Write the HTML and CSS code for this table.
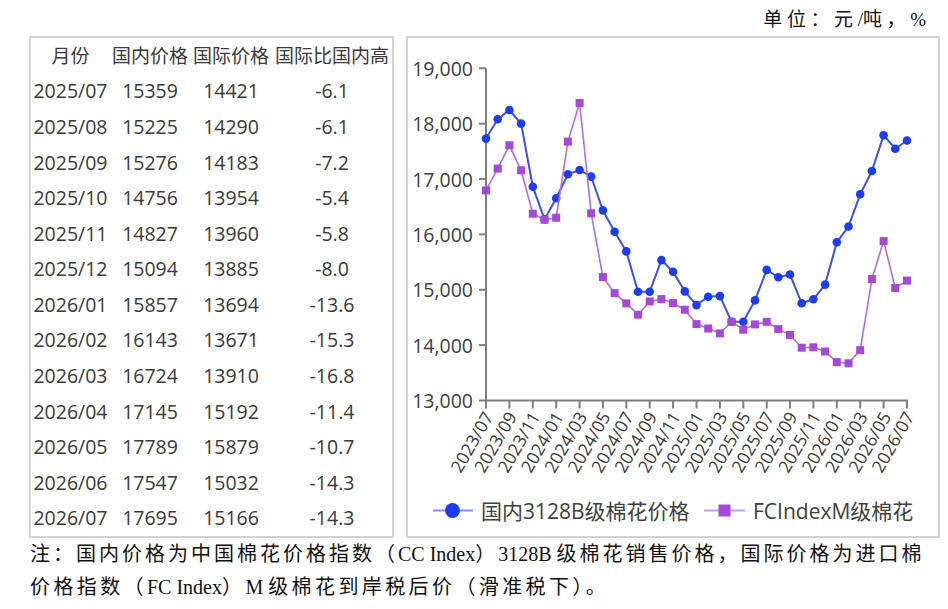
FILE: index.html
```html
<!DOCTYPE html>
<html lang="zh">
<head>
<meta charset="utf-8">
<title>棉花价格</title>
<link rel="stylesheet" href="styles.css">
</head>
<body>
<div class="unit">单位：元<span class="lat">/</span>吨，<span class="lat">%</span></div>
<div class="main">
  <div class="tbl">
    <div class="row head"><span>月份</span><span>国内价格</span><span>国际价格</span><span>国际比国内高</span></div>
    <div class="row"><span>2025/07</span><span>15359</span><span>14421</span><span>-6.1</span></div>
    <div class="row"><span>2025/08</span><span>15225</span><span>14290</span><span>-6.1</span></div>
    <div class="row"><span>2025/09</span><span>15276</span><span>14183</span><span>-7.2</span></div>
    <div class="row"><span>2025/10</span><span>14756</span><span>13954</span><span>-5.4</span></div>
    <div class="row"><span>2025/11</span><span>14827</span><span>13960</span><span>-5.8</span></div>
    <div class="row"><span>2025/12</span><span>15094</span><span>13885</span><span>-8.0</span></div>
    <div class="row"><span>2026/01</span><span>15857</span><span>13694</span><span>-13.6</span></div>
    <div class="row"><span>2026/02</span><span>16143</span><span>13671</span><span>-15.3</span></div>
    <div class="row"><span>2026/03</span><span>16724</span><span>13910</span><span>-16.8</span></div>
    <div class="row"><span>2026/04</span><span>17145</span><span>15192</span><span>-11.4</span></div>
    <div class="row"><span>2026/05</span><span>17789</span><span>15879</span><span>-10.7</span></div>
    <div class="row"><span>2026/06</span><span>17547</span><span>15032</span><span>-14.3</span></div>
    <div class="row"><span>2026/07</span><span>17695</span><span>15166</span><span>-14.3</span></div>
  </div>
  <div class="chart">
    <svg class="chart-svg" width="530" height="498" viewBox="0 0 530 498">
      <defs>
        <marker id="mb" markerUnits="userSpaceOnUse" markerWidth="10" markerHeight="10" refX="5" refY="5">
          <circle cx="5" cy="5" r="4.3" class="dot-blue"/>
        </marker>
        <marker id="mp" markerUnits="userSpaceOnUse" markerWidth="10" markerHeight="10" refX="5" refY="5">
          <rect x="1" y="1" width="8" height="8" class="dot-purple"/>
        </marker>
      </defs>
      <g transform="translate(-408 -38)">
        <g class="axis">
          <line x1="486" y1="68.3" x2="486" y2="401.5"/>
          <line x1="485" y1="400.5" x2="908" y2="400.5"/>
          <line x1="479" y1="68.3" x2="486" y2="68.3"/>
          <line x1="479" y1="123.7" x2="486" y2="123.7"/>
          <line x1="479" y1="179" x2="486" y2="179"/>
          <line x1="479" y1="234.4" x2="486" y2="234.4"/>
          <line x1="479" y1="289.8" x2="486" y2="289.8"/>
          <line x1="479" y1="345.1" x2="486" y2="345.1"/>
          <line x1="479" y1="400.5" x2="486" y2="400.5"/>
          <line x1="486" y1="400.5" x2="486" y2="408.5"/>
          <line x1="509.4" y1="400.5" x2="509.4" y2="408.5"/>
          <line x1="532.8" y1="400.5" x2="532.8" y2="408.5"/>
          <line x1="556.2" y1="400.5" x2="556.2" y2="408.5"/>
          <line x1="579.6" y1="400.5" x2="579.6" y2="408.5"/>
          <line x1="602.9" y1="400.5" x2="602.9" y2="408.5"/>
          <line x1="626.3" y1="400.5" x2="626.3" y2="408.5"/>
          <line x1="649.7" y1="400.5" x2="649.7" y2="408.5"/>
          <line x1="673.1" y1="400.5" x2="673.1" y2="408.5"/>
          <line x1="696.5" y1="400.5" x2="696.5" y2="408.5"/>
          <line x1="719.9" y1="400.5" x2="719.9" y2="408.5"/>
          <line x1="743.3" y1="400.5" x2="743.3" y2="408.5"/>
          <line x1="766.7" y1="400.5" x2="766.7" y2="408.5"/>
          <line x1="790" y1="400.5" x2="790" y2="408.5"/>
          <line x1="813.4" y1="400.5" x2="813.4" y2="408.5"/>
          <line x1="836.8" y1="400.5" x2="836.8" y2="408.5"/>
          <line x1="860.2" y1="400.5" x2="860.2" y2="408.5"/>
          <line x1="883.6" y1="400.5" x2="883.6" y2="408.5"/>
          <line x1="907" y1="400.5" x2="907" y2="408.5"/>
        </g>
        <g class="ylab">
          <text x="473" y="68.3">19,000</text>
          <text x="473" y="123.7">18,000</text>
          <text x="473" y="179">17,000</text>
          <text x="473" y="234.4">16,000</text>
          <text x="473" y="289.8">15,000</text>
          <text x="473" y="345.1">14,000</text>
          <text x="473" y="400.5">13,000</text>
        </g>
        <g class="xlab">
          <text x="488" y="413" transform="rotate(-60 488 413)">2023/07</text>
          <text x="511.4" y="413" transform="rotate(-60 511.4 413)">2023/09</text>
          <text x="534.8" y="413" transform="rotate(-60 534.8 413)">2023/11</text>
          <text x="558.2" y="413" transform="rotate(-60 558.2 413)">2024/01</text>
          <text x="581.6" y="413" transform="rotate(-60 581.6 413)">2024/03</text>
          <text x="604.9" y="413" transform="rotate(-60 604.9 413)">2024/05</text>
          <text x="628.3" y="413" transform="rotate(-60 628.3 413)">2024/07</text>
          <text x="651.7" y="413" transform="rotate(-60 651.7 413)">2024/09</text>
          <text x="675.1" y="413" transform="rotate(-60 675.1 413)">2024/11</text>
          <text x="698.5" y="413" transform="rotate(-60 698.5 413)">2025/01</text>
          <text x="721.9" y="413" transform="rotate(-60 721.9 413)">2025/03</text>
          <text x="745.3" y="413" transform="rotate(-60 745.3 413)">2025/05</text>
          <text x="768.7" y="413" transform="rotate(-60 768.7 413)">2025/07</text>
          <text x="792" y="413" transform="rotate(-60 792 413)">2025/09</text>
          <text x="815.4" y="413" transform="rotate(-60 815.4 413)">2025/11</text>
          <text x="838.8" y="413" transform="rotate(-60 838.8 413)">2026/01</text>
          <text x="862.2" y="413" transform="rotate(-60 862.2 413)">2026/03</text>
          <text x="885.6" y="413" transform="rotate(-60 885.6 413)">2026/05</text>
          <text x="909" y="413" transform="rotate(-60 909 413)">2026/07</text>
        </g>
        <polyline class="line-blue" marker-start="url(#mb)" marker-mid="url(#mb)" marker-end="url(#mb)"
          points="486,138.6 497.7,119.3 509.4,110 521.1,123.6 532.8,186.7 544.5,219.4 556.2,198.3 567.9,174.3 579.6,170 591.2,176.6 602.9,210.4 614.6,231.7 626.3,251.4 638,291.8 649.7,291.8 661.4,260.1 673.1,271.7 684.8,291.4 696.5,305.1 708.2,296.7 719.9,296.1 731.6,321.8 743.3,321.8 755,300.4 766.7,269.9 778.3,277.3 790,274.5 801.7,303.3 813.4,299.3 825.1,284.6 836.8,242.3 848.5,226.5 860.2,194.3 871.9,171 883.6,135.3 895.3,148.7 907,140.5"/>
        <polyline class="line-purple" marker-start="url(#mp)" marker-mid="url(#mp)" marker-end="url(#mp)"
          points="486,190.4 497.7,168.6 509.4,145.3 521.1,170.3 532.8,213.7 544.5,219.7 556.2,217.7 567.9,141.6 579.6,103 591.2,213.3 602.9,277.1 614.6,293.1 626.3,303.4 638,314.7 649.7,301.4 661.4,299.1 673.1,303.1 684.8,309.7 696.5,324.1 708.2,328.5 719.9,333.4 731.6,321.8 743.3,329.7 755,324.4 766.7,321.8 778.3,329.1 790,335 801.7,347.7 813.4,347.3 825.1,351.5 836.8,362.1 848.5,363.3 860.2,350.1 871.9,279.1 883.6,241.1 895.3,288 907,280.6"/>
        <g class="legend">
          <line class="leg-line-blue" x1="433" y1="510.5" x2="473" y2="510.5"/>
          <circle class="dot-blue" cx="452.5" cy="510.5" r="7.5"/>
          <text x="481" y="510.5">国内3128B级棉花价格</text>
          <line class="leg-line-purple" x1="704" y1="510.5" x2="745" y2="510.5"/>
          <rect class="dot-purple" x="718.5" y="504.5" width="12" height="12"/>
          <text x="753" y="510.5">FCIndexM级棉花</text>
        </g>
      </g>
    </svg>
  </div>
</div>
<div class="note">
  <div class="note-line l1">注：国内价格为中国棉花价格指数（<span class="lat">CC Index</span>）<span class="lat">3128B </span>级棉花销售价格，国际价格为进口棉</div>
  <div class="note-line l2">价格指数（<span class="lat">FC Index</span>）<span class="lat">M </span>级棉花到岸税后价（滑准税下）。</div>
</div>
</body>
</html>
```
FILE: styles.css
```css
html, body {
  margin: 0;
  padding: 0;
  background: #ffffff;
}
body {
  width: 948px;
  height: 609px;
  overflow: hidden;
  font-family: "Open Sans", "Noto Sans CJK SC", sans-serif;
  color: #333333;
}
.unit {
  box-sizing: border-box;
  height: 36px;
  padding-top: 6px;
  padding-right: 22px;
  text-align: right;
  font-family: "Liberation Serif", "Noto Sans CJK SC", serif;
  font-size: 19px;
  line-height: 27px;
  letter-spacing: 4.6px;
  color: #111111;
}
.lat {
  letter-spacing: 0;
}
.main {
  display: flex;
  gap: 12px;
  padding-left: 29px;
  height: 502px;
}
.tbl {
  box-sizing: border-box;
  width: 365px;
  height: 502px;
  border: 2px solid #d2d2d2;
  display: flex;
  flex-direction: column;
  font-size: 19.5px;
  color: #3a3a3a;
}
.row {
  flex: 1;
  display: grid;
  grid-template-columns: 79px 80px 82px 1fr;
  align-items: center;
  text-align: center;
  white-space: nowrap;
}
.head {
  font-size: 19px;
}
.row span {
  line-height: 24px;
}
.chart {
  box-sizing: border-box;
  width: 534px;
  height: 502px;
  border: 2px solid #d2d2d2;
}
.chart-svg {
  display: block;
}
.axis line {
  stroke: #7f7f7f;
  stroke-width: 2;
}
.ylab text {
  font-family: "Open Sans", sans-serif;
  font-size: 19.5px;
  fill: #404040;
  text-anchor: end;
  dominant-baseline: central;
}
.xlab text {
  font-family: "Open Sans", sans-serif;
  font-size: 17.5px;
  fill: #3a3a3a;
  text-anchor: end;
  dominant-baseline: central;
}
.line-blue {
  fill: none;
  stroke: #3a52e6;
  stroke-width: 2;
}
.line-purple {
  fill: none;
  stroke: #b46be2;
  stroke-width: 1.6;
}
.dot-blue {
  fill: #1c3cf6;
}
.dot-purple {
  fill: #a548d8;
}
.leg-line-blue {
  stroke: #7f8ff0;
  stroke-width: 2;
}
.leg-line-purple {
  stroke: #c797ec;
  stroke-width: 2;
}
.legend text {
  font-family: "Open Sans", "Noto Sans CJK SC", sans-serif;
  font-size: 21px;
  fill: #404040;
  dominant-baseline: central;
}
.note {
  padding-left: 30px;
  font-family: "Liberation Serif", "Noto Sans CJK SC", serif;
  font-size: 20px;
  line-height: 33px;
  color: #111111;
  white-space: nowrap;
}
.l1 {
  letter-spacing: 3px;
}
.l2 {
  letter-spacing: 3.4px;
}
```
